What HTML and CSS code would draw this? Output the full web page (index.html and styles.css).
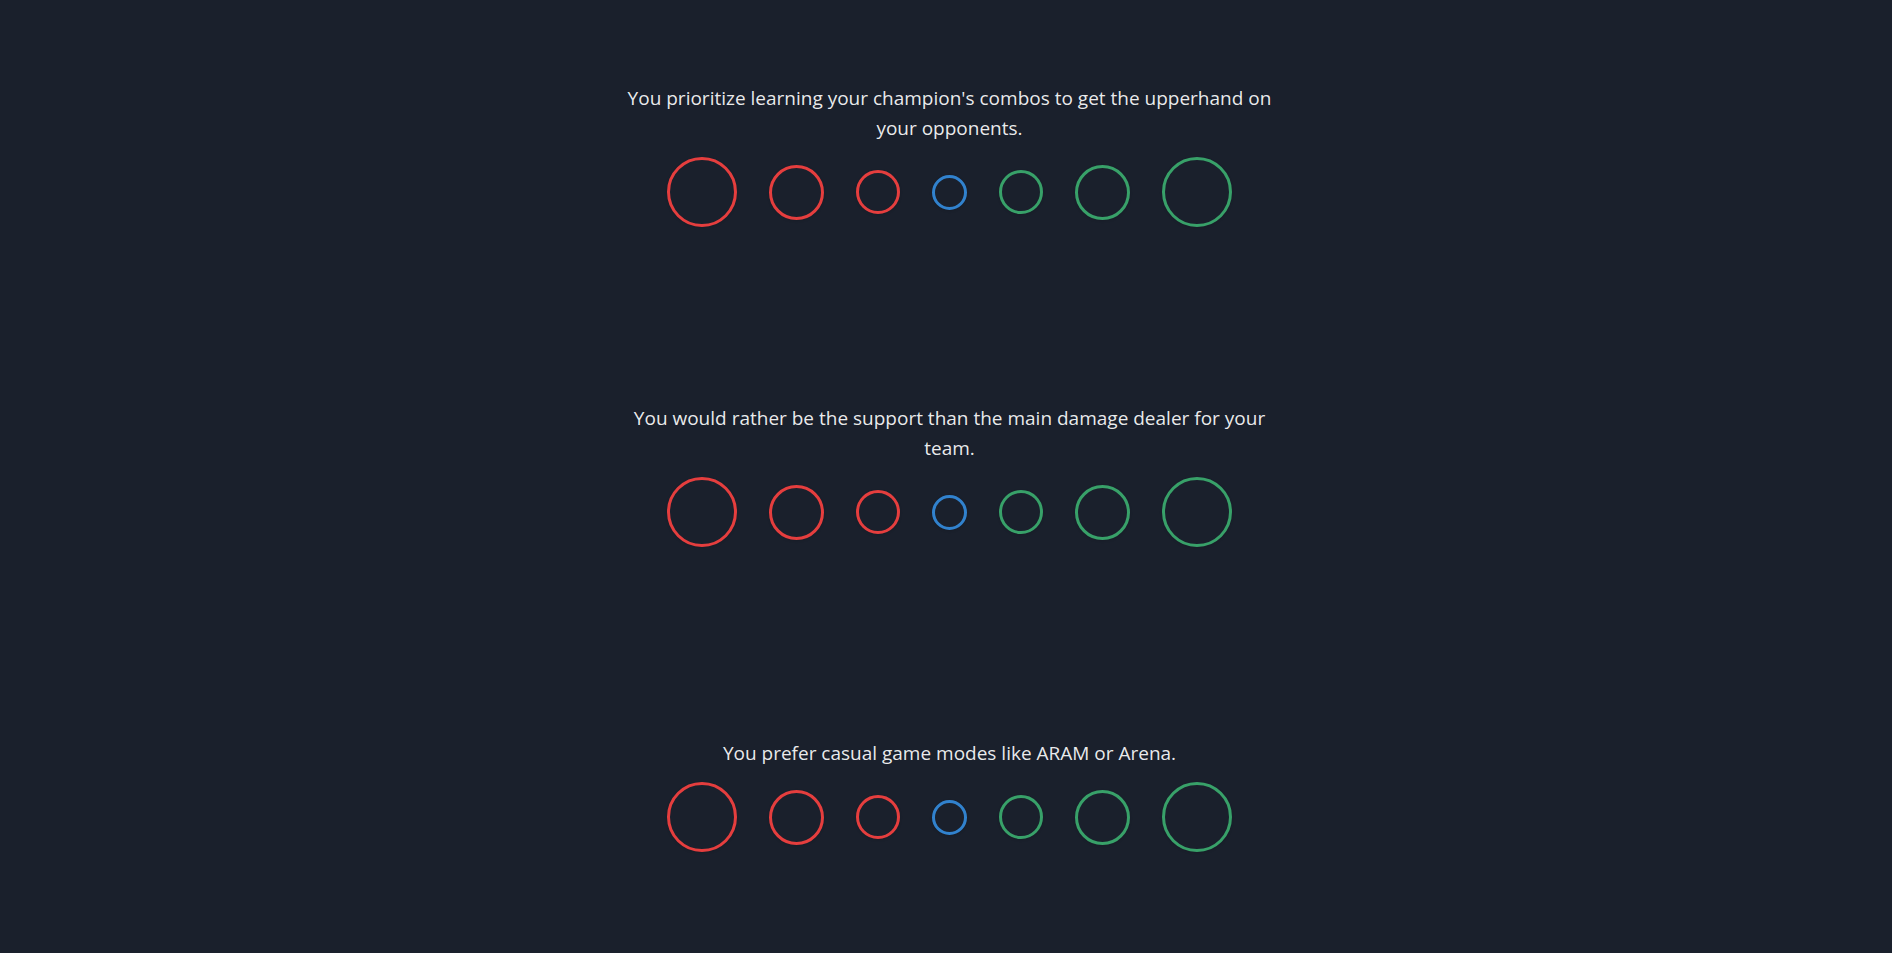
FILE: index.html
```html
<!DOCTYPE html>
<html lang="en">
<head>
<meta charset="utf-8">
<title>Quiz</title>
<link rel="stylesheet" href="styles.css">
</head>
<body>
<main class="quiz">
  <section class="question">
    <p class="prompt">You prioritize learning your champion's combos to get the upperhand on your opponents.</p>
    <div class="scale">
      <button class="dot red xl" aria-label="Strongly disagree"></button>
      <button class="dot red lg" aria-label="Disagree"></button>
      <button class="dot red md" aria-label="Somewhat disagree"></button>
      <button class="dot blue sm" aria-label="Neutral"></button>
      <button class="dot green md" aria-label="Somewhat agree"></button>
      <button class="dot green lg" aria-label="Agree"></button>
      <button class="dot green xl" aria-label="Strongly agree"></button>
    </div>
  </section>
  <section class="question">
    <p class="prompt">You would rather be the support than the main damage dealer for your team.</p>
    <div class="scale">
      <button class="dot red xl" aria-label="Strongly disagree"></button>
      <button class="dot red lg" aria-label="Disagree"></button>
      <button class="dot red md" aria-label="Somewhat disagree"></button>
      <button class="dot blue sm" aria-label="Neutral"></button>
      <button class="dot green md" aria-label="Somewhat agree"></button>
      <button class="dot green lg" aria-label="Agree"></button>
      <button class="dot green xl" aria-label="Strongly agree"></button>
    </div>
  </section>
  <section class="question">
    <p class="prompt">You prefer casual game modes like ARAM or Arena.</p>
    <div class="scale">
      <button class="dot red xl" aria-label="Strongly disagree"></button>
      <button class="dot red lg" aria-label="Disagree"></button>
      <button class="dot red md" aria-label="Somewhat disagree"></button>
      <button class="dot blue sm" aria-label="Neutral"></button>
      <button class="dot green md" aria-label="Somewhat agree"></button>
      <button class="dot green lg" aria-label="Agree"></button>
      <button class="dot green xl" aria-label="Strongly agree"></button>
    </div>
  </section>
</main>
</body>
</html>
```

FILE: styles.css
```css
html, body {
  margin: 0;
  padding: 0;
  background: #1a202c;
  height: 100%;
}

body {
  font-family: "Open Sans", "Noto Sans", sans-serif;
  color: rgba(255, 255, 255, 0.92);
  overflow: hidden;
}

.quiz {
  display: flex;
  flex-direction: column;
  gap: 10px;
  padding-left: 7px;
}

.question {
  height: 310px;
  display: flex;
  flex-direction: column;
  align-items: center;
  justify-content: center;
  gap: 14px;
}

.prompt {
  margin: 0;
  max-width: 664px;
  text-align: center;
  font-size: 19px;
  line-height: 30px;
}

.scale {
  display: flex;
  align-items: center;
  gap: 32px;
  height: 70px;
}

.dot {
  padding: 0;
  margin: 0;
  background: transparent;
  border: 3px solid;
  border-radius: 50%;
  box-sizing: border-box;
  box-shadow: 0 1px 3px rgba(0, 0, 0, 0.12);
  cursor: pointer;
}

.red { border-color: #e53e3e; }
.blue { border-color: #3182ce; }
.green { border-color: #38a169; }

.xl { width: 70px; height: 70px; }
.lg { width: 55px; height: 55px; }
.md { width: 44px; height: 44px; }
.sm { width: 35px; height: 35px; }
```
